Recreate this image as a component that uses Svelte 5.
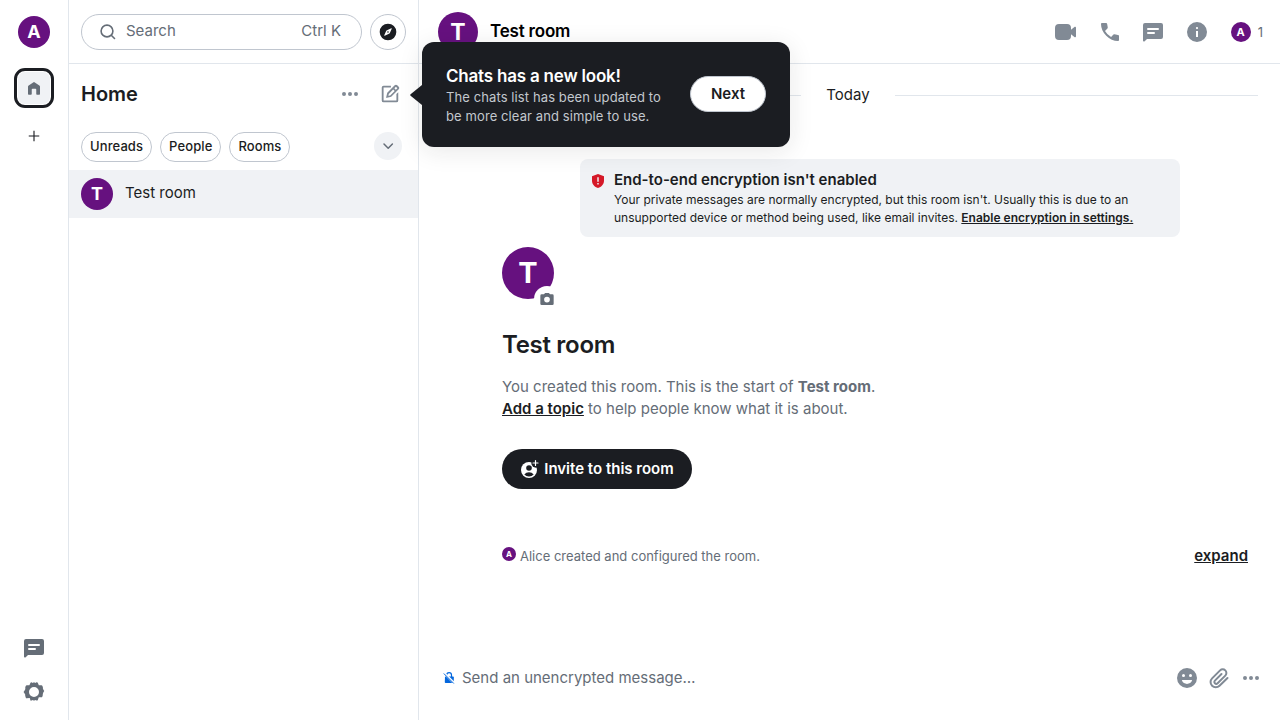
<script>
  const filters = ['Unreads', 'People', 'Rooms'];
  const icons = {
    home: 'M4 20V10.2a2 2 0 0 1 .9-1.7l6-4a2 2 0 0 1 2.2 0l6 4a2 2 0 0 1 .9 1.7V20a1 1 0 0 1-1 1h-3a1 1 0 0 1-1-1v-6a1 1 0 0 0-1-1h-4a1 1 0 0 0-1 1v6a1 1 0 0 1-1 1H5a1 1 0 0 1-1-1Z',
    plus: 'M11.25 5h1.5v6.25H19v1.5h-6.25V19h-1.5v-6.25H5v-1.5h6.25Z',
    threads: 'M4 3h16a2 2 0 0 1 2 2v12a2 2 0 0 1-2 2H6l-2.3 2.3c-.63.63-1.7.18-1.7-.7V5a2 2 0 0 1 2-2Zm3 5a1 1 0 0 0 0 2h10a1 1 0 1 0 0-2H7Zm0 4a1 1 0 1 0 0 2h6a1 1 0 1 0 0-2H7Z',
    video: 'M6 4h8a4 4 0 0 1 4 4v1.7l3.4-2.8c.65-.54 1.6-.1 1.6.8v8.6c0 .9-.95 1.34-1.6.8L18 14.3V16a4 4 0 0 1-4 4H6a4 4 0 0 1-4-4V8a4 4 0 0 1 4-4Z',
    call: 'M20.95 21c-2.08 0-4.14-.45-6.17-1.36a18.8 18.8 0 0 1-5.54-3.88 18.8 18.8 0 0 1-3.88-5.54A14.97 14.97 0 0 1 4 4.05 1 1 0 0 1 5.05 3H9.1a1 1 0 0 1 1 .85l.65 3.5a1.2 1.2 0 0 1-.3 1.05L8 10.9a16.5 16.5 0 0 0 6.1 6.05l2.35-2.35a1.3 1.3 0 0 1 1.05-.35l3.45.7a1 1 0 0 1 1.05 1v4A1 1 0 0 1 20.95 21Z',
    info: 'M12 2a10 10 0 1 0 0 20 10 10 0 0 0 0-20Zm0 5a1.1 1.1 0 1 1 0 2.2A1.1 1.1 0 0 1 12 7Zm-1 4h2v6h-2Z',
    compass: 'M12 2a10 10 0 1 0 0 20 10 10 0 0 0 0-20Zm4.5 6.1-2.3 5.1a2 2 0 0 1-1 1l-5.1 2.3c-.4.2-.8-.2-.6-.6l2.3-5.1a2 2 0 0 1 1-1l5.1-2.3c.4-.2.8.2.6.6ZM12 11a1 1 0 1 0 0 2 1 1 0 0 0 0-2Z',
    compose: 'M13 3v2H5v14h14v-7l2-2v9a2 2 0 0 1-2 2H5a2 2 0 0 1-2-2V5a2 2 0 0 1 2-2h8Zm4.1-.5a2 2 0 0 1 2.8 0l1.6 1.6a2 2 0 0 1 0 2.8l-8.2 8.2-4.5 1.1a.75.75 0 0 1-.9-.9L9 10.7l8.1-8.2Zm1.4 1.6L16.8 5.8l1.5 1.6L20 5.7l-1.5-1.6Zm-3 3L10.7 12l-.5 2 2-.5 4.9-4.9-1.6-1.5Z',
    cog: 'm8.5 21.3-.5-2.9a7 7 0 0 1-.4-.3l-2.8.2a1 1 0 0 1-1-.6 10 10 0 0 0-.6-1.7 1 1 0 0 1 .2-1.1L2.3 13a1.2 1.2 0 0 1 0-2l1.1-2-.2-1.1c.1-.8.3-1.5.7-2.2a1 1 0 0 1 .9-.4l2.6-.1 1.1-2.5a1 1 0 0 1 .9-.5L10.9 3c.7-.9 1.5-.9 2.2 0l1.5-.8c.4-.2 1 .1 1.2.6l1 2.4 2.6.1a1 1 0 0 1 .9.4l.5 1.2a1 1 0 0 1 0 1.1l.7 2c.9.7.9 1.3 0 2l-.7 2c.2.9-.1 1.8-.5 2.7a1 1 0 0 1-.9.5l-2.6.1-1 2.6a1 1 0 0 1-1.2.6l-1.5-.6c-.7.9-1.5.9-2.2 0l-1.4.7c-.4.2-.8 0-1-.3ZM12 7a5 5 0 1 0 0 10 5 5 0 0 0 0-10Z',
    shield: 'M12 1.5 3 4.7v6.8c0 5 3.9 9.3 9 11 5.1-1.7 9-6 9-11V4.7L12 1.5Zm-1.1 5h2.2v6.7h-2.2Zm0 8.5h2.2v2.2h-2.2Z',
    camera: 'M9.2 3h5.6l1.8 2H20a2 2 0 0 1 2 2v12a2 2 0 0 1-2 2H4a2 2 0 0 1-2-2V7a2 2 0 0 1 2-2h3.4l1.8-2ZM12 8.5a4.3 4.3 0 1 0 0 8.6 4.3 4.3 0 0 0 0-8.6Z',
    emoji: 'M12 2a10 10 0 1 0 0 20 10 10 0 0 0 0-20ZM8.5 8a1.5 1.5 0 1 1 0 3 1.5 1.5 0 0 1 0-3Zm7 0a1.5 1.5 0 1 1 0 3 1.5 1.5 0 0 1 0-3ZM7.4 14h9.2c.4 0 .6.3.5.6a5.6 5.6 0 0 1-10.2 0c-.1-.3.1-.6.5-.6Z',
    dots: 'M6 14a2 2 0 1 1 0-4 2 2 0 0 1 0 4Zm6 0a2 2 0 1 1 0-4 2 2 0 0 1 0 4Zm6 0a2 2 0 1 1 0-4 2 2 0 0 1 0 4Z'
  };
</script>

{#snippet icon(name, size)}
  <svg width={size} height={size} viewBox="0 0 24 24" fill="currentColor" fill-rule="evenodd" aria-hidden="true"><path d={icons[name]} /></svg>
{/snippet}

<div class="app">
  <nav class="spaces">
    <span class="avatar a32">A</span>
    <div class="space-home">{@render icon('home', 18)}</div>
    <div class="add">{@render icon('plus', 18)}</div>
    <div class="bottom">
      {@render icon('threads', 24)}
      {@render icon('cog', 24)}
    </div>
  </nav>

  <aside class="rooms">
    <div class="search-row">
      <div class="search">
        <svg width="20" height="20" viewBox="0 0 20 20" fill="none" stroke="currentColor" stroke-width="1.6" stroke-linecap="round" aria-hidden="true"><circle cx="9" cy="9" r="5.9" /><path d="m13.5 13.5 3 3" /></svg>
        <span>Search</span><kbd>Ctrl K</kbd>
      </div>
      <div class="explore">{@render icon('compass', 20)}</div>
    </div>
    <div class="title-row">
      <h1>Home</h1>
      {@render icon('dots', 24)}
      <span class="compose">{@render icon('compose', 22)}</span>
    </div>
    <div class="filters">
      {#each filters as f}<span class="chip">{f}</span>{/each}
      <span class="chevron"><svg width="20" height="20" viewBox="0 0 20 20" fill="none" stroke="currentColor" stroke-width="1.5" stroke-linecap="round" stroke-linejoin="round" aria-hidden="true"><path d="m6 8 4.2 4.2L14.400 8" /></svg></span>
    </div>
    <div class="room"><span class="avatar a32">T</span><span class="room-name">Test room</span></div>
  </aside>

  <main>
    <header>
      <span class="avatar a40">T</span>
      <span class="header-name">Test room</span>
      <div class="actions">
        {@render icon('video', 24)}
        {@render icon('call', 24)}
        {@render icon('threads', 24)}
        {@render icon('info', 24)}
        <span class="members"><span class="avatar a20">A</span>1</span>
      </div>
    </header>

    <section class="timeline">
      <div class="date"><i></i><span>Today</span><i></i></div>
      <div class="notice">
        {@render icon('shield', 16)}
        <div>
          <strong>End-to-end encryption isn't enabled</strong>
          <p>Your private messages are normally encrypted, but this room isn't. Usually this is due to an<br />unsupported device or method being used, like email invites. <a href="#settings">Enable encryption in settings.</a></p>
        </div>
      </div>
      <div class="intro">
        <div class="big"><span class="avatar a52">T</span><span class="cam">{@render icon('camera', 16)}</span></div>
        <h2>Test room</h2>
        <p>You created this room. This is the start of <b>Test room</b>.<br /><a href="#topic">Add a topic</a> to help people know what it is about.</p>
        <button class="invite">
          <svg width="20" height="20" viewBox="0 0 20 20" aria-hidden="true">
            <circle cx="9" cy="11" r="8" fill="#fff" />
            <circle cx="16" cy="4" r="4.7" fill="#1b1d22" />
            <circle cx="9" cy="9" r="2.8" fill="#1b1d22" />
            <path d="M4.300 15.600a5.800 5.800 0 0 1 9.400 0A6.600 6.600 0 0 1 9 17.500a6.600 6.600 0 0 1-4.700-1.900Z" fill="#1b1d22" />
            <path d="M15.500 1.500v5M13 4h5" stroke="#fff" stroke-width="1.200" stroke-linecap="round" />
          </svg>Invite to this room
        </button>
      </div>
      <div class="event"><span class="avatar a14">A</span><span>Alice created and configured the room.</span><a href="#expand">expand</a></div>
    </section>

    <footer>
      <svg class="lock" width="12" height="12" viewBox="0 0 12 12" aria-hidden="true"><path d="M3.700 4V3a2.400 2.400 0 0 1 4.800 0v2" fill="none" stroke="#0467dd" stroke-width="1.200" /><path d="M2 4.500h8a.8.8 0 0 1 .8.8v5.700H2.600a.8.8 0 0 1-.8-.8Z" fill="#0467dd" /><path d="m1.500 1.500 10 10" stroke="#fff" stroke-width="2.400" /><path d="m.8 1.500 10 10" stroke="#0467dd" stroke-width="1" /></svg>
      <span>Send an unencrypted message…</span>
      <div class="tools">
        {@render icon('emoji', 24)}
        <svg width="24" height="24" viewBox="0 0 24 24" fill="none" stroke="currentColor" stroke-width="2" stroke-linecap="round" stroke-linejoin="round" aria-hidden="true"><path d="m20.500 12-8 7.800a5.200 5.200 0 0 1-7.400-7.400l8-8a3.600 3.600 0 0 1 5.200 5.200l-7.700 7.700a1.900 1.900 0 0 1-2.700-2.700l6.600-6.600" /></svg>
        {@render icon('dots', 24)}
      </div>
    </footer>
  </main>

  <div class="tip">
    <svg class="arrow" width="12" height="20" viewBox="0 0 12 20" aria-hidden="true"><path d="M12 0v20L.6 10.700a1 1 0 0 1 0-1.400Z" fill="#1b1d22" /></svg>
    <div class="tip-text">
      <strong>Chats has a new look!</strong>
      <p>The chats list has been updated to<br />be more clear and simple to use.</p>
    </div>
    <button>Next</button>
  </div>
</div>

<style>
  :global(body) { margin: 0; background: #fff; }
  .app { position: relative; display: flex; width: 1280px; height: 720px; overflow: hidden; background: #fff; color: #1b1d22; font: 400 15px/22px Inter, sans-serif; }
  .app * { box-sizing: border-box; }
  svg { display: block; flex: none; }
  h1, h2, p { margin: 0; }
  a { color: #1b1d22; font-weight: 600; text-decoration: underline; }
  button { font: 600 15px/22px Inter, sans-serif; border: 0; }

  .avatar { display: flex; align-items: center; justify-content: center; flex: none; border-radius: 50%; background: #66117f; color: #fff; font-weight: 700; }
  .a32 { width: 32px; height: 32px; font-size: 18px; }
  .a40 { width: 40px; height: 40px; font-size: 23px; }
  .a52 { width: 52px; height: 52px; font-size: 29px; }
  .a20 { width: 20px; height: 20px; font-size: 11px; }
  .a14 { width: 14px; height: 14px; font-size: 8px; }

  .spaces { width: 69px; flex: none; border-right: 1px solid #e1e6ec; display: flex; flex-direction: column; align-items: center; padding: 16px 0; color: #656d77; }
  .space-home { margin-top: 20px; width: 40px; height: 40px; border: 3px solid #1b1d22; border-radius: 11px; background: #f0f2f5; display: grid; place-items: center; box-shadow: inset 0 0 0 1px #fff; }
  .add { margin-top: 19px; color: #1b1d22; }
  .bottom { margin-top: auto; display: grid; gap: 20px; }

  .rooms { width: 350px; flex: none; border-right: 1px solid #e1e6ec; }
  .search-row { height: 64px; border-bottom: 1px solid #e1e6ec; padding: 0 12px; display: flex; align-items: center; gap: 8px; }
  .search { flex: 1; height: 36px; border: 1px solid #c0c6cf; border-radius: 18px; display: flex; align-items: center; gap: 8px; padding: 0 20px 0 16px; color: #656d77; }
  .search span, .search kbd { position: relative; top: -1px; }
  .search kbd { margin-left: auto; font: inherit; }
  .explore { width: 36px; height: 36px; border: 1px solid #c0c6cf; border-radius: 50%; display: grid; place-items: center; }
  .title-row { height: 60px; padding: 0 17px 0 12px; display: flex; align-items: center; color: #818a95; }
  h1 { flex: 1; font-size: 20px; line-height: 26px; font-weight: 600; color: #1b1d22; }
  .compose { margin-left: 17px; }
  .filters { height: 46px; padding: 8px 16px 0 12px; display: flex; align-items: flex-start; gap: 8px; }
  .chip { height: 30px; border: 1px solid #c0c6cf; border-radius: 15px; padding: 0 8px; font-size: 13px; line-height: 27px; font-weight: 500; letter-spacing: .1px; }
  .chevron { width: 28px; height: 28px; margin-left: auto; border-radius: 50%; background: #f0f2f5; display: grid; place-items: center; color: #656d77; }
  .room { height: 48px; background: #f0f2f5; display: flex; align-items: center; gap: 12px; padding: 0 12px; }
  .room-name { margin-top: -2px; }

  main { flex: 1; min-width: 0; display: flex; flex-direction: column; }
  header { height: 64px; flex: none; border-bottom: 1px solid #e1e6ec; padding: 0 17px 0 19px; display: flex; align-items: center; }
  .header-name { margin: -2px 0 0 12px; font-size: 17px; font-weight: 600; letter-spacing: -.2px; color: #000; }
  .actions { margin-left: auto; display: flex; align-items: center; gap: 20px; color: #818a95; }
  .members { display: flex; align-items: center; gap: 7px; margin-left: 2px; font-size: 13px; color: #656d77; }

  .timeline { flex: 1; padding: 20px 22px 0 19px; }
  .date { display: flex; align-items: center; gap: 25px; height: 22px; }
  .date i { flex: 1; height: 1px; background: #e1e6ec; }
  .notice { width: 600px; height: 78px; margin: 53px 0 0 142px; border-radius: 8px; background: #f0f2f5; padding: 10px; display: flex; gap: 8px; color: #d51928; }
  .notice > :global(svg) { margin-top: 4px; }
  .notice div { color: #1b1d22; }
  .notice strong { display: block; font-weight: 600; line-height: 22px; }
  .notice p { font-size: 12px; line-height: 18px; white-space: nowrap; }
  .intro { padding-left: 64px; margin-top: 10px; }
  .big { width: 52px; height: 52px; position: relative; }
  .cam { position: absolute; left: 32px; top: 39px; width: 26px; height: 26px; border-radius: 50%; background: #fff; display: grid; place-items: center; color: #656d77; }
  h2 { margin-top: 30px; font-size: 24px; line-height: 32px; font-weight: 600; letter-spacing: -.3px; }
  .intro p { margin-top: 15px; color: #656d77; }
  .invite { margin-top: 29px; width: 190px; height: 40px; border-radius: 20px; background: #1b1d22; color: #fff; display: flex; align-items: center; justify-content: center; gap: 4px; padding: 0; white-space: nowrap; }
  .event { display: flex; align-items: center; margin-top: 56px; padding: 0 10px 0 64px; font-size: 13px; color: #656d77; height: 22px; gap: 4px; }
  .event .avatar { margin-top: -4px; }
  .event a { margin-left: auto; font-size: 15px; }

  footer { height: 84px; padding: 0 17px 0 24px; display: flex; align-items: center; color: #656d77; }
  footer span { margin-left: 7px; }
  .tools { display: flex; gap: 8px; margin-left: auto; color: #818a95; }

  .tip { position: absolute; left: 422px; top: 42px; width: 368px; height: 105px; background: #1b1d22; border-radius: 12px; display: flex; align-items: center; justify-content: space-between; padding: 0 24px; color: #fff; box-shadow: 0 4px 24px rgba(27, 29, 34, .1); }
  .arrow { position: absolute; left: -12px; top: 43px; }
  .tip strong { display: block; font-size: 17px; line-height: 24px; font-weight: 600; letter-spacing: -.2px; }
  .tip p { font-size: 13px; line-height: 19px; color: #c3c8ce; letter-spacing: .1px; }
  .tip button { width: 76px; height: 36px; margin-top: -2px; border-radius: 18px; background: #fff; border: 1px solid #c0c6cf; color: #1b1d22; padding: 0; }
</style>
